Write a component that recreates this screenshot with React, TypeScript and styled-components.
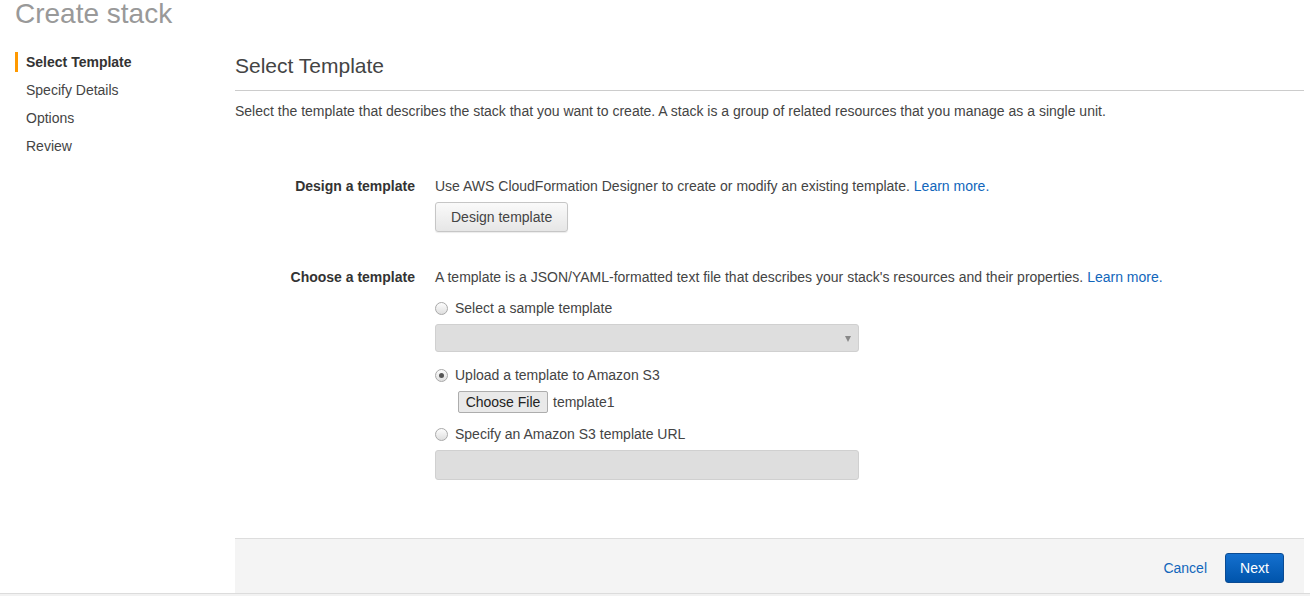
import React from "react";
import styled, { createGlobalStyle } from "styled-components";

const Global = createGlobalStyle`
  html, body { margin: 0; padding: 0; background: #fff; }
  body { font-family: "Liberation Sans", Arial, sans-serif; font-size: 14px; color: #444; }
  * { box-sizing: border-box; }
`;

const Page = styled.div`
  width: 1310px;
  height: 596px;
  display: flex;
  flex-direction: column;
  overflow: hidden;
`;

const PageTitle = styled.h1`
  margin: 0;
  padding-left: 15px;
  font-size: 28px;
  line-height: 28px;
  font-weight: 400;
  color: #999;
  height: 28px;
`;

const Body = styled.div`
  display: flex;
  flex: 1;
  min-height: 0;
`;

const Sidebar = styled.nav`
  width: 235px;
  padding: 20px 0 0 15px;
  display: flex;
  flex-direction: column;
`;

const NavItem = styled.div<{ $active?: boolean }>`
  position: relative;
  height: 28px;
  line-height: 28px;
  padding-left: 11px;
  font-size: 14px;
  color: ${(p) => (p.$active ? "#333" : "#444")};
  font-weight: ${(p) => (p.$active ? 700 : 400)};
  &::before {
    content: "";
    display: ${(p) => (p.$active ? "block" : "none")};
    position: absolute;
    left: 0;
    top: 4px;
    width: 3px;
    height: 20px;
    background: #f90;
  }
`;

const Main = styled.main`
  flex: 1;
  margin-right: 6px;
  display: flex;
  flex-direction: column;
`;

const Heading = styled.h2`
  margin: 26px 0 0;
  font-size: 21px;
  line-height: 24px;
  font-weight: 400;
  color: #444;
  padding-bottom: 12px;
  border-bottom: 1px solid #ccc;
`;

const Description = styled.p`
  margin: 10px 0 0;
  line-height: 20px;
  color: #444;
`;

const Form = styled.div`
  margin-top: 55px;
  display: grid;
  grid-template-columns: 180px 1fr;
  column-gap: 20px;
  row-gap: 34px;
  flex: 1;
`;

const Label = styled.div`
  text-align: right;
  font-weight: 700;
  line-height: 20px;
  color: #333;
`;

const Field = styled.div`
  display: flex;
  flex-direction: column;
  align-items: flex-start;
`;

const Text = styled.div`
  line-height: 20px;
`;

const Link = styled.a`
  color: #1166bb;
  text-decoration: none;
  cursor: pointer;
`;

const DefaultButton = styled.button`
  margin-top: 6px;
  height: 30px;
  padding: 0 15px;
  font-family: inherit;
  font-size: 14px;
  color: #444;
  border: 1px solid #c6c6c6;
  border-radius: 3px;
  background: linear-gradient(#fafafa, #e6e6e6);
  box-shadow: 0 1px 1px rgba(0, 0, 0, 0.08);
`;

const RadioRow = styled.label<{ $gap: number }>`
  display: flex;
  align-items: center;
  gap: 7px;
  height: 20px;
  line-height: 20px;
  margin-top: ${(p) => p.$gap}px;
`;

const RadioDot = styled.span<{ $checked?: boolean }>`
  width: 13px;
  height: 13px;
  border-radius: 50%;
  border: 1px solid #a9a9a9;
  background: linear-gradient(#fdfdfd, #dedede);
  display: flex;
  align-items: center;
  justify-content: center;
  &::after {
    content: "";
    display: ${(p) => (p.$checked ? "block" : "none")};
    width: 5px;
    height: 5px;
    border-radius: 50%;
    background: #555;
  }
`;

const SelectBox = styled.div`
  position: relative;
  margin-top: 6px;
  width: 424px;
  height: 28px;
  background: #dedede;
  border: 1px solid #d0d0d0;
  border-radius: 3px;
  &::after {
    content: "";
    position: absolute;
    right: 7px;
    top: 11px;
    border-left: 3px solid transparent;
    border-right: 3px solid transparent;
    border-top: 6px solid #888;
  }
`;

const FileRow = styled.div`
  display: flex;
  align-items: center;
  gap: 5px;
  margin: 6px 0 0 23px;
  height: 22px;
`;

const FileButton = styled.button`
  height: 22px;
  width: 90px;
  padding: 0;
  font-family: inherit;
  font-size: 14px;
  color: #222;
  background: #e9e9e9;
  border: 1px solid #adadad;
  border-radius: 2px;
`;

const TextInput = styled.div`
  margin-top: 6px;
  width: 424px;
  height: 30px;
  background: #dedede;
  border: 1px solid #d0d0d0;
  border-radius: 3px;
`;

const Footer = styled.div`
  height: 55px;
  margin-top: 57px;
  border-top: 1px solid #ddd;
  background: #f4f4f4;
  display: flex;
  align-items: center;
  justify-content: flex-end;
  gap: 18px;
  padding: 3px 20px 0 0;
`;

const PrimaryButton = styled.button`
  height: 30px;
  width: 59px;
  font-family: inherit;
  font-size: 14px;
  color: #fff;
  border: 1px solid #0a4b93;
  border-radius: 3px;
  background: linear-gradient(#1470cf, #0054ab);
`;

const BottomBar = styled.div`
  height: 3px;
  border-top: 1px solid #dcdcdc;
  background: #f2f2f2;
  flex-shrink: 0;
`;

export default function App() {
  return (
    <Page>
      <Global />
      <PageTitle>Create stack</PageTitle>
      <Body>
        <Sidebar>
          <NavItem $active>Select Template</NavItem>
          <NavItem>Specify Details</NavItem>
          <NavItem>Options</NavItem>
          <NavItem>Review</NavItem>
        </Sidebar>
        <Main>
          <Heading>Select Template</Heading>
          <Description>
            Select the template that describes the stack that you want to create. A stack is a group of related resources that you manage as a single unit.
          </Description>
          <Form>
            <Label>Design a template</Label>
            <Field>
              <Text>
                Use AWS CloudFormation Designer to create or modify an existing template. <Link>Learn more.</Link>
              </Text>
              <DefaultButton>Design template</DefaultButton>
            </Field>
            <Label>Choose a template</Label>
            <Field>
              <Text>
                A template is a JSON/YAML-formatted text file that describes your stack's resources and their properties. <Link>Learn more.</Link>
              </Text>
              <RadioRow $gap={11}>
                <RadioDot />
                Select a sample template
              </RadioRow>
              <SelectBox />
              <RadioRow $gap={13}>
                <RadioDot $checked />
                Upload a template to Amazon S3
              </RadioRow>
              <FileRow>
                <FileButton>Choose File</FileButton>
                <span>template1</span>
              </FileRow>
              <RadioRow $gap={11}>
                <RadioDot />
                Specify an Amazon S3 template URL
              </RadioRow>
              <TextInput />
            </Field>
          </Form>
          <Footer>
            <Link>Cancel</Link>
            <PrimaryButton>Next</PrimaryButton>
          </Footer>
        </Main>
      </Body>
      <BottomBar />
    </Page>
  );
}
